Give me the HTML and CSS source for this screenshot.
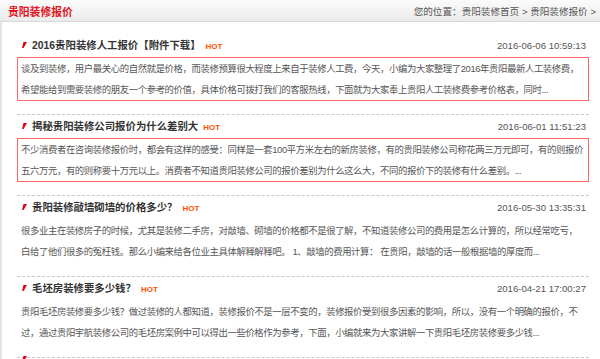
FILE: index.html
```html
<!DOCTYPE html>
<html lang="zh-CN">
<head>
  <meta charset="UTF-8">
  <title>贵阳装修报价</title>
  <link rel="stylesheet" href="styles.css">
</head>
<body>
  <div class="panel">
    <div class="panel-head">
      <h2>贵阳装修报价</h2>
      <div class="crumbs">您的位置：<a href="#">贵阳装修首页</a> &gt; <a href="#">贵阳装修报价</a> &gt;</div>
    </div>

    <ul class="news-list">
      <li class="news-item">
        <div class="news-title">
          <span class="mark"><svg width="5" height="6" viewBox="0 0 5 6"><polygon points="1.5,0 5,0 1.6,6 0,6" fill="#e60012"/></svg></span>
          <a href="#">2016贵阳装修人工报价【附件下载】</a>
          <span class="hot">HOT</span>
          <span class="date">2016-06-06 10:59:13</span>
        </div>
        <p class="summary boxed">谈及到装修，用户最关心的自然就是价格，而装修预算很大程度上来自于装修人工费，今天，小编为大家整理了2016年贵阳最新人工装修费，希望能给到需要装修的朋友一个参考的价值，具体价格可拨打我们的客服热线，下面就为大家奉上贵阳人工装修费参考价格表，同时...</p>
      </li>
      <li class="news-item">
        <div class="news-title">
          <span class="mark"><svg width="5" height="6" viewBox="0 0 5 6"><polygon points="1.5,0 5,0 1.6,6 0,6" fill="#e60012"/></svg></span>
          <a href="#">揭秘贵阳装修公司报价为什么差别大</a>
          <span class="hot">HOT</span>
          <span class="date">2016-06-01 11:51:23</span>
        </div>
        <p class="summary boxed">不少消费者在咨询装修报价时，都会有这样的感受：同样是一套100平方米左右的新房装修，有的贵阳装修公司称花两三万元即可，有的则报价五六万元，有的则称要十万元以上。消费者不知道贵阳装修公司的报价差别为什么这么大，不同的报价下的装修有什么差别。...</p>
      </li>
      <li class="news-item">
        <div class="news-title">
          <span class="mark"><svg width="5" height="6" viewBox="0 0 5 6"><polygon points="1.5,0 5,0 1.6,6 0,6" fill="#e60012"/></svg></span>
          <a href="#">贵阳装修敲墙砌墙的价格多少？</a>
          <span class="hot">HOT</span>
          <span class="date">2016-05-30 13:35:31</span>
        </div>
        <p class="summary">很多业主在装修房子的时候，尤其是装修二手房，对敲墙、砌墙的价格都不是很了解，不知道装修公司的费用是怎么计算的，所以经常吃亏，白给了他们很多的冤枉钱。那么小编来给各位业主具体解释解释吧。 1、敲墙的费用计算： 在贵阳，敲墙的话一般根据墙的厚度而...</p>
      </li>
      <li class="news-item">
        <div class="news-title">
          <span class="mark"><svg width="5" height="6" viewBox="0 0 5 6"><polygon points="1.5,0 5,0 1.6,6 0,6" fill="#e60012"/></svg></span>
          <a href="#">毛坯房装修要多少钱？</a>
          <span class="hot">HOT</span>
          <span class="date">2016-04-21 17:00:27</span>
        </div>
        <p class="summary">贵阳毛坯房装修要多少钱？做过装修的人都知道，装修报价不是一层不变的，装修报价受到很多因素的影响，所以，没有一个明确的报价，不过，通过贵阳宇航装修公司的毛坯房案例中可以得出一些价格作为参考，下面，小编就来为大家讲解一下贵阳毛坯房装修要多少钱...</p>
      </li>
      <li class="news-item">
        <div class="news-title">
          <span class="mark"><svg width="5" height="6" viewBox="0 0 5 6"><polygon points="1.5,0 5,0 1.6,6 0,6" fill="#e60012"/></svg></span>
        </div>
      </li>
    </ul>
  </div>
</body>
</html>
```

FILE: styles.css
```css
body {
  margin: 0;
  padding: 0;
  background-color: #ffffff;
  font-family: 'Liberation Sans', 'Noto Sans CJK SC', sans-serif;
  color: #555;
  overflow: hidden;
}

a {
  color: inherit;
  text-decoration: none;
}

.panel {
  width: 600px;
  height: 359px;
  overflow: hidden;
}

.panel-head {
  display: flex;
  justify-content: space-between;
  align-items: center;
  height: 21px;
  padding: 0 4px 0 8px;
  background: linear-gradient(#fbfbfb, #ebebeb);
  border-bottom: 1px solid #d8d8d8;
}

.panel-head h2 {
  margin: 0;
  font-size: 10.8px;
  font-weight: bold;
  color: #e0141e;
}

.crumbs {
  font-size: 9.6px;
  color: #555;
}

.news-list {
  list-style: none;
  margin: 0;
  padding: 12px 11px 0 15px;
  border-left: 2px solid #e4e4e4;
}

.news-item {
  padding: 2px 0 13px;
  border-bottom: 1px dashed #c8c8c8;
}

.news-title {
  display: flex;
  align-items: baseline;
  line-height: 20px;
  padding: 0 3px 0 5px;
}

.mark {
  width: 5px;
  margin-right: 5px;
  align-self: center;
  display: flex;
  margin-top: -4px;
}

.news-title a {
  font-size: 10.4px;
  font-weight: bold;
  color: #333;
}

.hot {
  margin-left: 5px;
  font-size: 8px;
  font-weight: bold;
  color: #ff5000;
}

.date {
  margin-left: auto;
  font-size: 9.6px;
  color: #555;
}

.summary {
  margin: 0;
  padding: 0 3px;
  font-size: 9.4px;
  letter-spacing: -0.4px;
  line-height: 21px;
  border: 1px solid transparent;
}

.summary.boxed {
  border-color: #f66;
}
```
